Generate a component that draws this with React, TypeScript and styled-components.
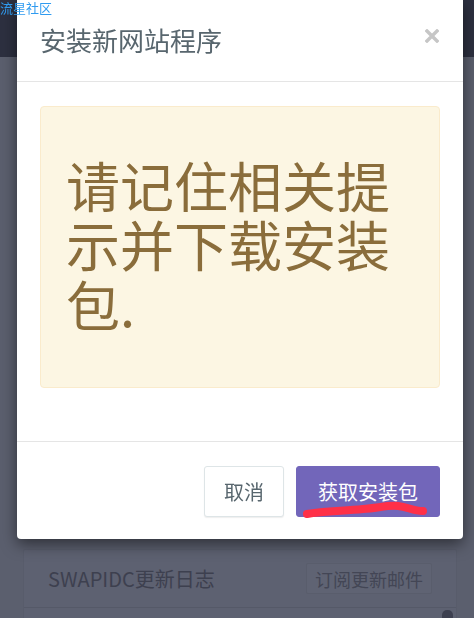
import React from 'react'
import styled, { createGlobalStyle } from 'styled-components'

const GlobalStyle = createGlobalStyle`
  html, body {
    margin: 0;
    padding: 0;
    height: 100%;
    overflow: hidden;
  }

  body {
    font-family: 'Noto Sans CJK SC', 'Noto Sans', sans-serif;
    background: #5b5f6e;
  }
`

const Watermark = styled.a`
  position: fixed;
  top: 0;
  left: 0;
  z-index: 20;
  font-size: 13px;
  line-height: 15px;
  color: #2f9bf0;
  text-decoration: none;
`

const Page = styled.div`
  display: flex;
  flex-direction: column;
  min-height: 618px;
`

const TopBar = styled.div`
  height: 57px;
  background: #2d3040;
`

const Content = styled.div`
  display: flex;
  flex-direction: column;
  gap: 20px;
  padding: 20px 17px 0 23px;
`

const Card = styled.div<{ height?: number }>`
  background: #5d6171;
  border: 1px solid #585c6b;
  border-radius: 2px;
  ${({ height }) => (height ? `height: ${height}px;` : '')}
`

const CardHeader = styled.div`
  display: flex;
  align-items: center;
  justify-content: space-between;
  height: 57px;
  padding: 0 24px;
  border-bottom: 1px solid #555968;
`

const CardTitle = styled.div`
  font-size: 20px;
  color: #3d404f;
`

const GhostButton = styled.div`
  height: 31px;
  box-sizing: border-box;
  padding: 0 8px;
  display: flex;
  align-items: center;
  font-size: 18px;
  color: #434655;
  background: #5f6373;
  border: 1px solid #595d6c;
  border-radius: 2px;
`

const CardBody = styled.div`
  display: flex;
  justify-content: flex-end;
  padding: 2px 3px 0;
`

const Thumb = styled.div`
  width: 11px;
  height: 14px;
  border-radius: 5px 5px 0 0;
  background: #3d4050;
`

const Modal = styled.div`
  position: fixed;
  top: 0;
  left: 17px;
  width: 446px;
  background: #fff;
  border-radius: 0 0 4px 4px;
  box-shadow: 0 5px 15px rgba(0, 0, 0, 0.5);
  z-index: 10;
`

const ModalHeader = styled.div`
  display: flex;
  justify-content: space-between;
  align-items: flex-start;
  padding: 22px 24px 23px 23px;
  border-bottom: 1px solid #e5e5e5;
`

const ModalTitle = styled.h4`
  margin: 0;
  font-size: 26px;
  font-weight: 400;
  line-height: 36px;
  color: #58666e;
`

const Close = styled.button`
  margin-top: 7px;
  padding: 0;
  border: 0;
  background: none;
  display: flex;
`

const ModalBody = styled.div`
  padding: 24px 23px 53px;
`

const Alert = styled.div`
  padding: 48px 23px 54px 25px;
  background: #fcf6e3;
  border: 1px solid #faebcc;
  border-radius: 4px;
  color: #8a6d3b;
`

const AlertText = styled.h1`
  margin: 0;
  font-size: 54px;
  font-weight: 400;
  line-height: 1.1;
`

const ModalFooter = styled.div`
  display: flex;
  justify-content: flex-end;
  gap: 12px;
  padding: 24px 23px 22px;
  border-top: 1px solid #e5e5e5;
`

const Button = styled.button<{ primary?: boolean }>`
  position: relative;
  height: 51px;
  padding: 0 ${({ primary }) => (primary ? 21 : 19)}px;
  font-family: inherit;
  font-size: 20px;
  border-radius: 3px;
  color: ${({ primary }) => (primary ? '#fff' : '#58666e')};
  background: ${({ primary }) => (primary ? '#7266ba' : '#fff')};
  border: 1px solid ${({ primary }) => (primary ? '#7266ba' : '#dee5e7')};
  box-shadow: ${({ primary }) => (primary ? 'none' : '0 1px 1px rgba(90, 90, 90, 0.1)')};
`

const Scribble = styled.svg`
  position: absolute;
  left: 6px;
  top: 37px;
  overflow: visible;
  pointer-events: none;
`

const CloseIcon = () => (
  <svg width="14" height="14" viewBox="0 0 14 14">
    <path d="M2 2 L12 12 M12 2 L2 12" stroke="#c6c6c6" strokeWidth="3.4" strokeLinecap="square" />
  </svg>
)

export default function App() {
  return (
    <>
      <GlobalStyle />
      <Watermark>流星社区</Watermark>
      <Page>
        <TopBar />
        <Content>
          <Card height={450} />
          <Card>
            <CardHeader>
              <CardTitle>SWAPIDC更新日志</CardTitle>
              <GhostButton>订阅更新邮件</GhostButton>
            </CardHeader>
            <CardBody>
              <Thumb />
            </CardBody>
          </Card>
        </Content>
      </Page>

      <Modal>
        <ModalHeader>
          <ModalTitle>安装新网站程序</ModalTitle>
          <Close aria-label="close">
            <CloseIcon />
          </Close>
        </ModalHeader>
        <ModalBody>
          <Alert>
            <AlertText>请记住相关提示并下载安装包.</AlertText>
          </Alert>
        </ModalBody>
        <ModalFooter>
          <Button>取消</Button>
          <Button primary>
            获取安装包
            <Scribble width="124" height="14">
              <path
                d="M4 10 C 20 7, 40 7, 60 5 C 75 4, 85 1, 95 2 C 105 3, 110 7, 120 7"
                stroke="#ff3048"
                strokeWidth="8"
                strokeLinecap="round"
                fill="none"
              />
            </Scribble>
          </Button>
        </ModalFooter>
      </Modal>
    </>
  )
}
